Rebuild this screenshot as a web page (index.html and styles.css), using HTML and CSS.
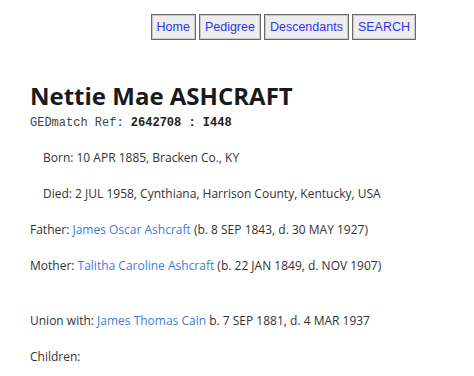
FILE: index.html
```html
<!DOCTYPE html>
<html lang="en">
<head>
  <meta charset="UTF-8">
  <title>Nettie Mae ASHCRAFT</title>
  <link rel="stylesheet" href="styles.css">
</head>
<body>
  <nav class="menu">
    <a href="#">Home</a>
    <a href="#">Pedigree</a>
    <a href="#">Descendants</a>
    <a href="#">SEARCH</a>
  </nav>

  <div class="person">
    <h1>Nettie Mae ASHCRAFT</h1>
    <div class="ref">GEDmatch Ref: <b>2642708 : I448</b></div>

    <p class="event">Born: 10 APR 1885, Bracken Co., KY</p>
    <p class="event">Died: 2 JUL 1958, Cynthiana, Harrison County, Kentucky, USA</p>

    <p>Father: <a href="#">James Oscar Ashcraft</a> (b. 8 SEP 1843, d. 30 MAY 1927)</p>
    <p>Mother: <a href="#">Talitha Caroline Ashcraft</a> (b. 22 JAN 1849, d. NOV 1907)</p>

    <p class="union">Union with: <a href="#">James Thomas Cain</a> b. 7 SEP 1881, d. 4 MAR 1937</p>
    <p>Children:</p>
  </div>
</body>
</html>
```

FILE: styles.css
```css
/* Page */
body {
    margin: 0;
    padding: 0 30px;
    font-family: 'Open Sans', sans-serif;
    font-size: 12px;
    color: #333;
    background: #fff;
}

/* Top menu, looks like an old bordered table */
.menu {
    display: flex;
    justify-content: flex-end;
    gap: 3px;
    padding-top: 14px;
    padding-right: 28px;
}

.menu a {
    font-family: 'Liberation Sans', Arial, sans-serif;
    font-size: 12.5px;
    color: #3333ee;
    text-decoration: none;
    background: #eeeeee;
    border: 1px solid #6a6a6a;
    box-shadow: inset 0 0 0 1px #c8c8c8;
    padding: 4px 5px;
    line-height: 16px;
}

/* Person details */
.person {
    padding-top: 40px;
}

h1 {
    margin: 0;
    font-size: 24px;
    font-weight: 700;
    color: #1a1a1a;
    line-height: 32px;
}

.ref {
    font-family: 'Liberation Mono', 'Courier New', monospace;
    font-size: 12px;
    color: #444;
    margin-top: 4px;
}

.ref b {
    color: #222;
}

p {
    margin: 0;
    line-height: 36px;
}

.event {
    padding-left: 13px;
}

.person .ref + .event {
    margin-top: 10px;
}

.union {
    margin-top: 19px;
}

a {
    color: #3b7ddd;
    text-decoration: none;
}
```
